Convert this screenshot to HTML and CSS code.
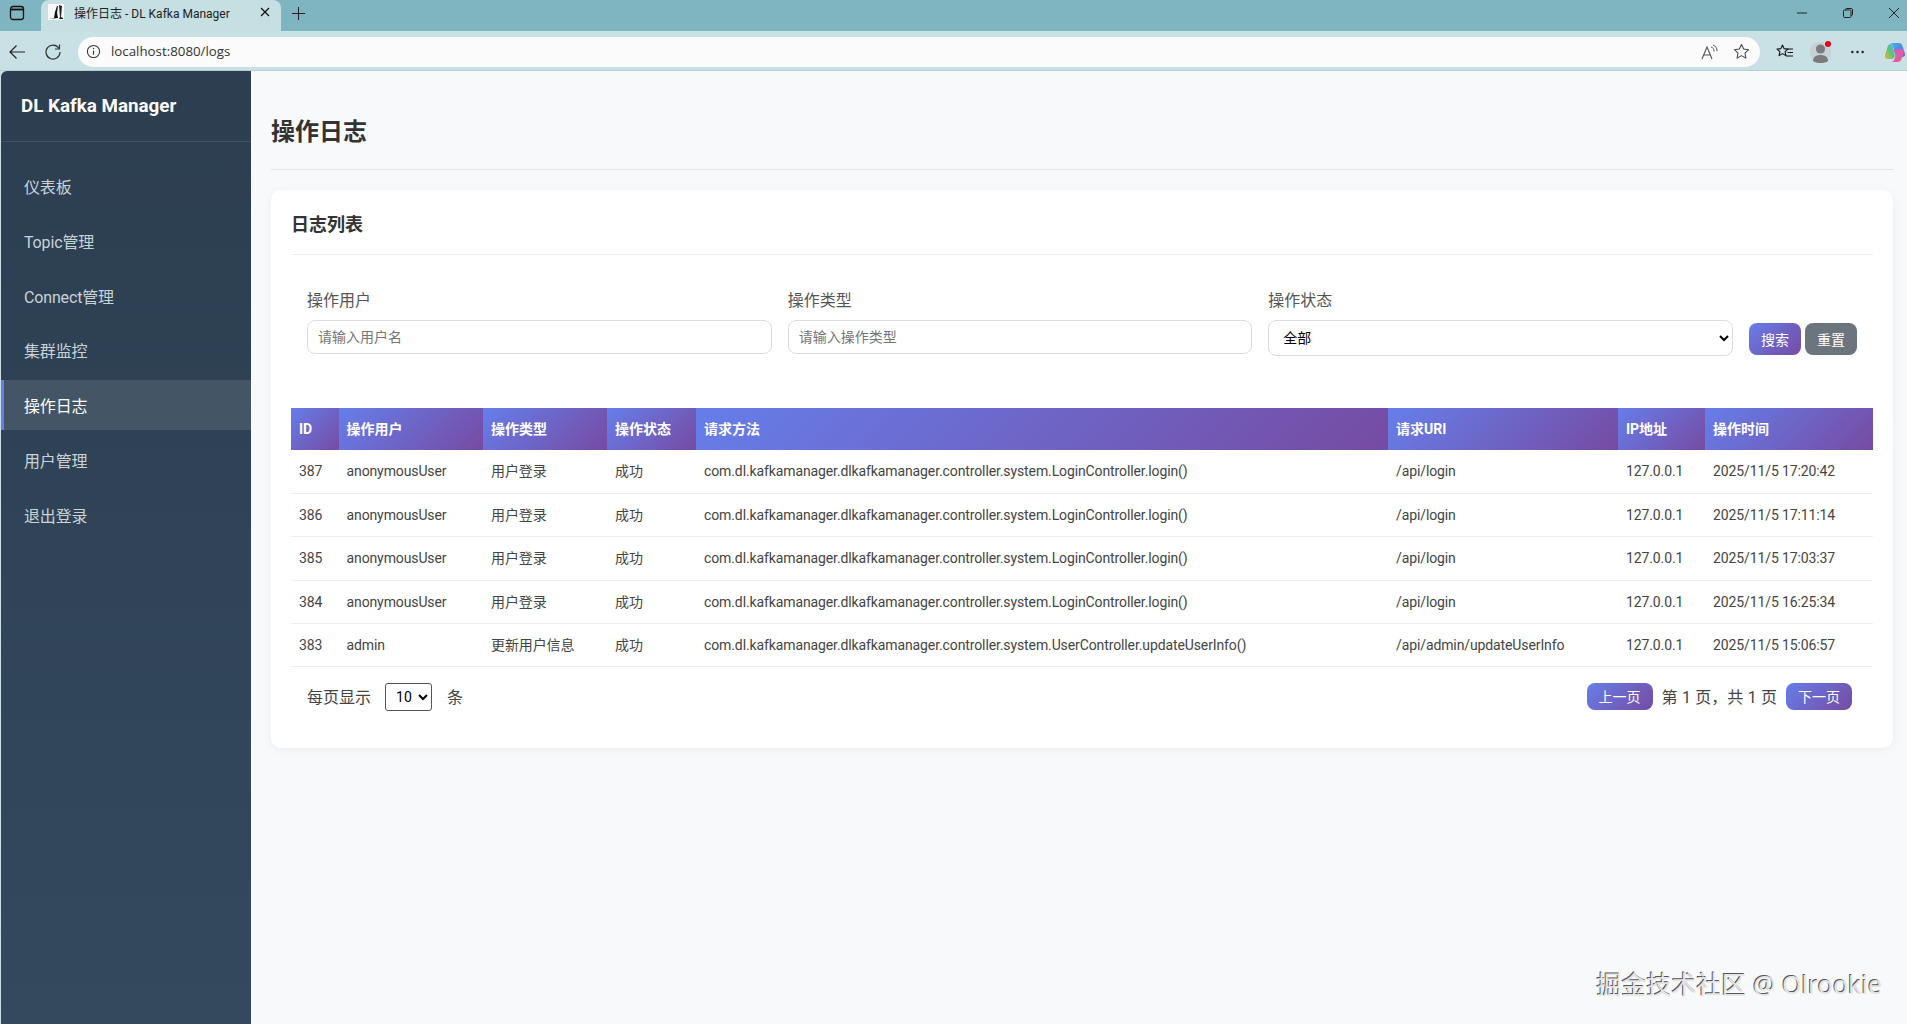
FILE: index.html
```html
<!DOCTYPE html>
<html lang="zh-CN">
<head>
<meta charset="utf-8">
<title>操作日志 - DL Kafka Manager</title>
<link rel="stylesheet" href="styles.css">
</head>
<body>
<div class="browser">
  <div class="tabstrip">
    <svg class="ic panel-ic" viewBox="0 0 16 16"><rect x="1.500" y="1.500" width="13" height="13" rx="2.500" fill="none" stroke="#111" stroke-width="1.300"/><path d="M1.500 4.500h13" stroke="#111" stroke-width="1.800"/></svg>
    <div class="tab">
      <svg class="favicon" viewBox="0 0 16 16"><rect width="16" height="16" fill="#f7f7f7"/><path d="M1 15l5-1 1-6 2-6 1 0-1 7 1 5-9 1z" fill="#111"/><path d="M11 1l3 1-1 11 2 1v1h-4l1-2z" fill="#222"/></svg>
      <span class="tab-title">操作日志 - DL Kafka Manager</span>
      <svg class="ic tab-close" viewBox="0 0 10 10"><path d="M1 1l8 8M9 1l-8 8" stroke="#111" stroke-width="1.200"/></svg>
    </div>
    <svg class="ic plus-ic" viewBox="0 0 16 16"><path d="M8 1v14M1 8h14" stroke="#222" stroke-width="1.100"/></svg>
    <div class="win-controls">
      <svg class="ic win-ic" viewBox="0 0 12 12"><path d="M1 6h10" stroke="#222" stroke-width="1"/></svg>
      <svg class="ic win-ic" viewBox="0 0 12 12"><rect x="1.500" y="3" width="7.500" height="7.500" rx="1.200" fill="none" stroke="#222"/><path d="M3.500 3V2.600c0-.7.5-1.100 1.100-1.100h4.600c.8 0 1.300.5 1.300 1.300v4.600c0 .6-.4 1.100-1.100 1.100H9" fill="none" stroke="#222"/></svg>
      <svg class="ic win-ic" viewBox="0 0 12 12"><path d="M1 1l10 10M11 1L1 11" stroke="#222" stroke-width="1"/></svg>
    </div>
  </div>
  <div class="toolbar">
    <svg class="ic tool-ic" viewBox="0 0 18 18"><path d="M17 9H2M8.500 2.500L2 9l6.500 6.500" fill="none" stroke="#222" stroke-width="1.200"/></svg>
    <svg class="ic tool-ic refresh" viewBox="0 0 18 18"><path d="M15 5.500A7 7 0 1 0 16 9" fill="none" stroke="#333" stroke-width="1.200"/><path d="M15.500 1.500v4.500H11" fill="none" stroke="#333" stroke-width="1.200"/></svg>
    <div class="addressbar">
      <svg class="ic info-ic" viewBox="0 0 16 16"><circle cx="8" cy="8" r="6.500" fill="none" stroke="#333" stroke-width="1.100"/><path d="M8 7v4.500" stroke="#333" stroke-width="1.200"/><circle cx="8" cy="4.800" r=".8" fill="#333"/></svg>
      <span class="url">localhost:8080/logs</span>
      <svg class="ic addr-ic read-ic" viewBox="0 0 18 16"><path d="M1 15L6 3l5 12M3 11h6" fill="none" stroke="#555" stroke-width="1.100"/><path d="M10 3c2 .6 3 2 3.200 4.500M12 1c2.400.8 4 3 4.200 6" fill="none" stroke="#555"/></svg>
      <svg class="ic addr-ic star-ic" viewBox="0 0 18 18"><path d="M9 1.500l2.300 4.900 5.200.7-3.800 3.600 1 5.300L9 13.400 4.300 16l1-5.300L1.500 7.100l5.200-.7z" fill="none" stroke="#444" stroke-width="1.100" stroke-linejoin="round"/></svg>
    </div>
    <svg class="ic fav-ic" viewBox="0 0 18 18"><path d="M6.500 2l1.600 3.600 3.900.5-2.900 2.600.8 3.900-3.400-2-3.400 2 .8-3.900L1 6.100l3.900-.5z" fill="none" stroke="#111" stroke-width="1.100" stroke-linejoin="round"/><path d="M11.500 6h5.500M11.500 9.500H17M10 13h7" stroke="#111" stroke-width="1.100"/></svg>
    <svg class="profile" viewBox="0 0 22 22"><rect x="0" y="1" width="21" height="21" rx="9" fill="#c8d2d4"/><circle cx="10.500" cy="8" r="4.600" fill="#7b7b7b"/><path d="M3 20c0-4 3-6 7.500-6s7.500 2 7.500 6c-2 1.500-4.500 2-7.500 2S5 21.500 3 20z" fill="#7b7b7b"/><circle cx="18" cy="3" r="3" fill="#e2001a"/></svg>
    <svg class="ic dots" viewBox="0 0 16 4"><circle cx="2.500" cy="2" r="1.300" fill="#222"/><circle cx="8" cy="2" r="1.300" fill="#222"/><circle cx="13.500" cy="2" r="1.300" fill="#222"/></svg>
    <svg class="copilot" viewBox="0 0 22 22"><defs><linearGradient id="cpa" x1="0" y1="0" x2="1" y2="1"><stop offset="0" stop-color="#3fb6ee"/><stop offset="1" stop-color="#6b5ce0"/></linearGradient><linearGradient id="cpb" x1="0" y1="1" x2="1" y2="0"><stop offset="0" stop-color="#f5b32e"/><stop offset=".5" stop-color="#5cc47a"/><stop offset="1" stop-color="#3fb6ee"/></linearGradient><linearGradient id="cpc" x1="0" y1="0" x2="1" y2="1"><stop offset="0" stop-color="#c45cd8"/><stop offset="1" stop-color="#f0607a"/></linearGradient></defs><path d="M6 2h9c2 0 3 1 3.500 3L21 13c.5 2-1 3-3 3h-6l-3-11C8.500 3.500 7.500 2 6 2z" fill="url(#cpa)"/><path d="M7 3C5 3 4 4 3.500 6L1 14c-.6 2 .5 4 3 4h5l2-3-2-9C8.600 4 8 3 7 3z" fill="url(#cpb)"/><path d="M10 8h7c2 0 3 2 2.500 4l-2 6c-.6 2-2 3-4 3H7c2 0 3-1 3.500-3l1.500-5c.4-1.500-.6-2-2-2z" fill="url(#cpc)"/></svg>
  </div>
  <div class="app">
    <aside class="sidebar">
      <div class="brand">DL Kafka Manager</div>
      <nav class="nav">
        <a class="nav-item">仪表板</a>
        <a class="nav-item">Topic管理</a>
        <a class="nav-item">Connect管理</a>
        <a class="nav-item">集群监控</a>
        <a class="nav-item active">操作日志</a>
        <a class="nav-item">用户管理</a>
        <a class="nav-item">退出登录</a>
      </nav>
    </aside>
    <main class="main">
      <h1 class="page-title">操作日志</h1>
      <section class="card">
        <h2 class="card-title">日志列表</h2>
        <form class="filters">
          <div class="field"><label class="field-label">操作用户</label><input class="control" type="text" placeholder="请输入用户名"></div>
          <div class="field"><label class="field-label">操作类型</label><input class="control" type="text" placeholder="请输入操作类型"></div>
          <div class="field"><label class="field-label">操作状态</label><select class="control control-select"><option>全部</option></select></div>
          <div class="filter-actions">
            <button type="button" class="btn btn-primary">搜索</button>
            <button type="button" class="btn btn-grey">重置</button>
          </div>
        </form>
        <table class="log-table">
          <colgroup>
            <col class="c-id"><col class="c-user"><col class="c-type"><col class="c-status"><col class="c-method"><col class="c-uri"><col class="c-ip"><col class="c-time">
          </colgroup>
          <thead>
            <tr><th>ID</th><th>操作用户</th><th>操作类型</th><th>操作状态</th><th>请求方法</th><th>请求URI</th><th>IP地址</th><th>操作时间</th></tr>
          </thead>
          <tbody>
            <tr><td>387</td><td>anonymousUser</td><td>用户登录</td><td>成功</td><td>com.dl.kafkamanager.dlkafkamanager.controller.system.LoginController.login()</td><td>/api/login</td><td>127.0.0.1</td><td>2025/11/5 17:20:42</td></tr>
            <tr><td>386</td><td>anonymousUser</td><td>用户登录</td><td>成功</td><td>com.dl.kafkamanager.dlkafkamanager.controller.system.LoginController.login()</td><td>/api/login</td><td>127.0.0.1</td><td>2025/11/5 17:11:14</td></tr>
            <tr><td>385</td><td>anonymousUser</td><td>用户登录</td><td>成功</td><td>com.dl.kafkamanager.dlkafkamanager.controller.system.LoginController.login()</td><td>/api/login</td><td>127.0.0.1</td><td>2025/11/5 17:03:37</td></tr>
            <tr><td>384</td><td>anonymousUser</td><td>用户登录</td><td>成功</td><td>com.dl.kafkamanager.dlkafkamanager.controller.system.LoginController.login()</td><td>/api/login</td><td>127.0.0.1</td><td>2025/11/5 16:25:34</td></tr>
            <tr><td>383</td><td>admin</td><td>更新用户信息</td><td>成功</td><td>com.dl.kafkamanager.dlkafkamanager.controller.system.UserController.updateUserInfo()</td><td>/api/admin/updateUserInfo</td><td>127.0.0.1</td><td>2025/11/5 15:06:57</td></tr>
          </tbody>
        </table>
        <div class="pagination">
          <div class="page-size">
            <span>每页显示</span>
            <select class="size-select"><option>10</option></select>
            <span>条</span>
          </div>
          <div class="pager">
            <button type="button" class="btn btn-primary btn-page">上一页</button>
            <span class="page-info">第 1 页，共 1 页</span>
            <button type="button" class="btn btn-primary btn-page">下一页</button>
          </div>
        </div>
      </section>
    </main>
  </div>
</div>
<div class="watermark">掘金技术社区 @ Olrookie</div>
</body>
</html>
```
FILE: styles.css
```css
* { box-sizing: border-box; }
html, body { margin: 0; height: 100%; }
body {
  font-family: Roboto, "Noto Sans CJK SC", sans-serif;
  background: #c9e0e4;
  overflow: hidden;
  color: #333;
}
.browser { width: 1907px; height: 1024px; display: flex; flex-direction: column; }
.ic { display: block; flex: none; }

.tabstrip { height: 31px; flex: none; display: flex; align-items: center; background: #7fb5c0; }
.panel-ic { width: 16px; height: 16px; margin-left: 9px; margin-bottom: 5px; }
.tab {
  width: 240px; height: 31px; margin-left: 16px; padding: 0 0 7px 7px;
  display: flex; align-items: center; align-self: flex-start;
  background: #c6dfe3; border-radius: 8px 8px 0 0;
}
.favicon { width: 16px; height: 16px; flex: none; }
.tab-title { margin-left: 10px; font-size: 12px; color: #222; white-space: nowrap; flex: 1; }
.tab-close { width: 10px; height: 10px; margin-right: 11px; }
.plus-ic { width: 15px; height: 15px; margin-left: 10px; margin-bottom: 5px; }
.win-controls { margin-left: auto; display: flex; gap: 34px; padding-right: 7px; padding-bottom: 5px; }
.win-ic { width: 12px; height: 12px; }

.toolbar {
  height: 40px; flex: none; display: flex; align-items: center; padding: 5px 1px 3px 8px;
  background: #c9e0e4; border-bottom: 1px solid #b6cfd3;
}
.tool-ic { width: 18px; height: 18px; }
.refresh { margin-left: 18px; }
.addressbar {
  width: 1683px; height: 30px; margin-left: 16px; padding: 0 10px 0 8px;
  display: flex; align-items: center; background: #fbfbfb; border-radius: 15px;
}
.info-ic { width: 15px; height: 15px; }
.url { margin: 0 0 2px 10px; font-size: 13.300px; color: #333; flex: 1; font-family: "Open Sans", sans-serif; }
.addr-ic { width: 18px; height: 18px; }
.star-ic { margin-left: 14px; width: 17px; height: 17px; }
.fav-ic { width: 18px; height: 18px; margin-left: 16px; }
.profile { width: 22px; height: 22px; margin-left: 16px; flex: none; }
.dots { width: 15px; height: 4px; margin-left: 18px; }
.copilot { width: 22px; height: 22px; margin-left: 19px; flex: none; }

.app { flex: 1; display: flex; min-height: 0; padding-left: 1px; }
.sidebar {
  width: 250px; flex: none; border-radius: 6px 0 0 0;
  background: linear-gradient(180deg, #2c3e50, #34495e);
  color: #ecf0f1;
}
.brand {
  height: 71px; padding: 24px 20px 0; font-size: 18.800px; font-weight: 700; color: #fff;
  border-bottom: 1px solid rgba(255,255,255,.1);
}
.nav { display: flex; flex-direction: column; padding-top: 19px; gap: 4.800px; }
.nav-item {
  height: 50px; padding-left: 23px; display: flex; align-items: center;
  font-size: 16px; color: #c9d3d8; letter-spacing: -.15px;
}
.nav-item.active {
  background: rgba(255,255,255,.1); color: #fff;
  border-left: 3px solid #667eea; padding-left: 20px;
}

.main { flex: 1; min-width: 0; padding: 0 14px 0 20px; background: #f8f9fa; }
.page-title {
  margin: 0 0 20px; padding: 43px 0 19px; height: 99px;
  font-size: 24px; line-height: 36px; font-weight: 700; color: #333;
  border-bottom: 1px solid #e2e5e8;
}
.card {
  height: 558px; padding: 20px; background: #fff; border-radius: 10px;
  box-shadow: 0 2px 10px rgba(0,0,0,.05);
}
.card-title {
  margin: 0; height: 45px; padding: 1px 0 16px; font-size: 18px; line-height: 27px;
  font-weight: 700; color: #333; border-bottom: 1px solid #eeeff1;
}
.filters { display: flex; align-items: flex-start; gap: 16px; padding: 33px 16px 0; height: 153px; }
.field { flex: 1; min-width: 0; }
.field-label { display: block; height: 32px; font-size: 16px; line-height: 25px; color: #555; }
.control {
  display: block; width: 100%; height: 34px; padding: 0 10px; font-family: inherit; font-size: 14px;
  background: #fff; border: 1px solid #ddd; border-radius: 8px; color: #000;
}
.control::placeholder { color: #757575; }
.control-select { height: 36px; }
.filter-actions { flex: none; display: flex; gap: 4px; padding-top: 35px; }
.btn {
  height: 32px; width: 52px; padding: 0; border: 0; border-radius: 8px; color: #fff;
  font-family: inherit; font-size: 14px;
}
.btn-primary { background: linear-gradient(135deg, #667eea, #764ba2); }
.btn-grey { background: #6c757d; }

.log-table { width: 100%; table-layout: fixed; border-collapse: collapse; font-size: 14px; line-height: 20px; }
.c-id { width: 47.500px; } .c-user { width: 144.500px; } .c-type { width: 124px; }
.c-status { width: 89px; } .c-method { width: 692px; } .c-uri { width: 230px; }
.c-ip { width: 87px; } .c-time { width: 168px; }
.log-table th {
  height: 42px; padding: 0 8px; text-align: left; color: #fff; font-weight: 700;
  background: linear-gradient(135deg, #667eea, #764ba2);
}
.log-table td {
  height: 43.400px; padding: 0 8px; color: #444; white-space: nowrap; letter-spacing: -.11px;
  border-bottom: 1px solid #eceef0;
}

.pagination { display: flex; justify-content: space-between; align-items: center; padding: 14px 21px 0 16px; font-size: 16px; color: #444; }
.page-size { display: flex; align-items: center; gap: 14px; }
.size-select { width: 47px; height: 28px; margin: 2px 1px 0 0; font-size: 14px; font-family: inherit; background: #fff; border: 1px solid #555; border-radius: 3px; padding-left: 6px; color: #000; }
.pager { display: flex; align-items: center; gap: 9px; }
.btn-page { width: 66px; height: 27px; font-size: 14px; }
.page-info { color: #444; word-spacing: .4px; }

.watermark {
  position: absolute; right: 25px; bottom: 22px; font-size: 25px; line-height: 35px; white-space: nowrap;
  font-family: "Noto Sans", "Noto Sans CJK SC", sans-serif;
  color: #e4e4e4; text-shadow: -1px -1px 0 #555;
}
```
